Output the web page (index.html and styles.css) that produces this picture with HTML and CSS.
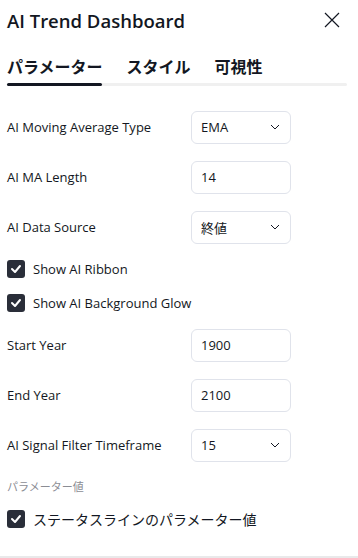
FILE: index.html
```html
<!DOCTYPE html>
<html>
<head>
	<title>AI Trend Dashboard</title>
	<link rel="stylesheet" href="styles.css">
</head>
<body>
	<div class="dialog">
		<div class="header">
			<h1>AI Trend Dashboard</h1>
			<button class="close" aria-label="close">
				<svg width="18" height="18" viewBox="0 0 18 18"><path d="M2 2L16 16M16 2L2 16" stroke="#131722" stroke-width="1.2" fill="none"/></svg>
			</button>
		</div>

		<div class="tabs">
			<div class="tab active">パラメーター</div>
			<div class="tab">スタイル</div>
			<div class="tab">可視性</div>
		</div>
		<div class="track"><div class="track-fill"></div></div>

		<div class="content">
			<div class="row">
				<span class="label">AI Moving Average Type</span>
				<div class="field select">EMA<svg class="chev" width="10" height="6" viewBox="0 0 10 6"><path d="M1 1L5 5L9 1" stroke="#131722" stroke-width="1" fill="none"/></svg></div>
			</div>
			<div class="row">
				<span class="label">AI MA Length</span>
				<div class="field">14</div>
			</div>
			<div class="row">
				<span class="label">AI Data Source</span>
				<div class="field select">終値<svg class="chev" width="10" height="6" viewBox="0 0 10 6"><path d="M1 1L5 5L9 1" stroke="#131722" stroke-width="1" fill="none"/></svg></div>
			</div>
			<div class="check-row">
				<span class="box"><svg width="12" height="10" viewBox="0 0 12 10"><path d="M2 5L5 8L10 2" stroke="#fff" stroke-width="2" fill="none" stroke-linecap="round" stroke-linejoin="round"/></svg></span>
				<span class="label">Show AI Ribbon</span>
			</div>
			<div class="check-row">
				<span class="box"><svg width="12" height="10" viewBox="0 0 12 10"><path d="M2 5L5 8L10 2" stroke="#fff" stroke-width="2" fill="none" stroke-linecap="round" stroke-linejoin="round"/></svg></span>
				<span class="label">Show AI Background Glow</span>
			</div>
			<div class="row">
				<span class="label">Start Year</span>
				<div class="field">1900</div>
			</div>
			<div class="row">
				<span class="label">End Year</span>
				<div class="field">2100</div>
			</div>
			<div class="row">
				<span class="label">AI Signal Filter Timeframe</span>
				<div class="field select">15<svg class="chev" width="10" height="6" viewBox="0 0 10 6"><path d="M1 1L5 5L9 1" stroke="#131722" stroke-width="1" fill="none"/></svg></div>
			</div>
			<div class="section">パラメーター値</div>
			<div class="check-row">
				<span class="box"><svg width="12" height="10" viewBox="0 0 12 10"><path d="M2 5L5 8L10 2" stroke="#fff" stroke-width="2" fill="none" stroke-linecap="round" stroke-linejoin="round"/></svg></span>
				<span class="label jp">ステータスラインのパラメーター値</span>
			</div>
		</div>
	</div>
</body>
</html>
```

FILE: styles.css
```css
body {
	margin: 0;
	background-color: #fff;
	font-family: "Open Sans", "Noto Sans CJK JP", sans-serif;
	color: #131722;
}

.dialog {
	width: 358px;
	height: 558px;
	box-sizing: border-box;
	border-bottom: 2px solid #e9e9ea;
	overflow: hidden;
}

.header {
	display: flex;
	align-items: center;
	justify-content: space-between;
	height: 40px;
	padding: 0 17px 0 7px;
}

h1 {
	font-size: 18.5px;
	font-weight: 600;
	margin: 0;
}

.close {
	display: flex;
	border: none;
	background: none;
	padding: 0;
	cursor: pointer;
}

.tabs {
	display: flex;
	gap: 24px;
	padding: 10px 7px 0;
	height: 31px;
	align-items: center;
}

.tab {
	font-size: 16px;
	font-weight: bold;
	font-family: "Noto Sans CJK JP", sans-serif;
}

.track {
	margin: 2px 0 0 7px;
	width: 340px;
	height: 3px;
	border-radius: 2px;
	background-color: #f0f0f0;
}

.track-fill {
	width: 95px;
	height: 3px;
	border-radius: 2px;
	background-color: #131722;
}

.content {
	padding: 16px 7px 0;
}

.row {
	display: flex;
	align-items: center;
	height: 50px;
}

.label {
	font-size: 13px;
	width: 184px;
}

.field {
	display: flex;
	align-items: center;
	justify-content: space-between;
	box-sizing: border-box;
	width: 100px;
	height: 33px;
	padding: 0 8px 0 9px;
	border: 1px solid #e0e3eb;
	border-radius: 6px;
	font-size: 13px;
}

.chev {
	margin-right: 2px;
}

.check-row {
	display: flex;
	align-items: center;
	gap: 8px;
	height: 34px;
}

.check-row .label {
	width: auto;
}

.box {
	display: flex;
	align-items: center;
	justify-content: center;
	width: 18px;
	height: 18px;
	border-radius: 3px;
	background-color: #2a2e39;
}

.section {
	display: flex;
	align-items: center;
	height: 32px;
	font-size: 11px;
	color: #8b8d94;
	font-family: "Noto Sans CJK JP", sans-serif;
}

.jp {
	font-size: 14px;
	font-family: "Noto Sans CJK JP", sans-serif;
}
```
